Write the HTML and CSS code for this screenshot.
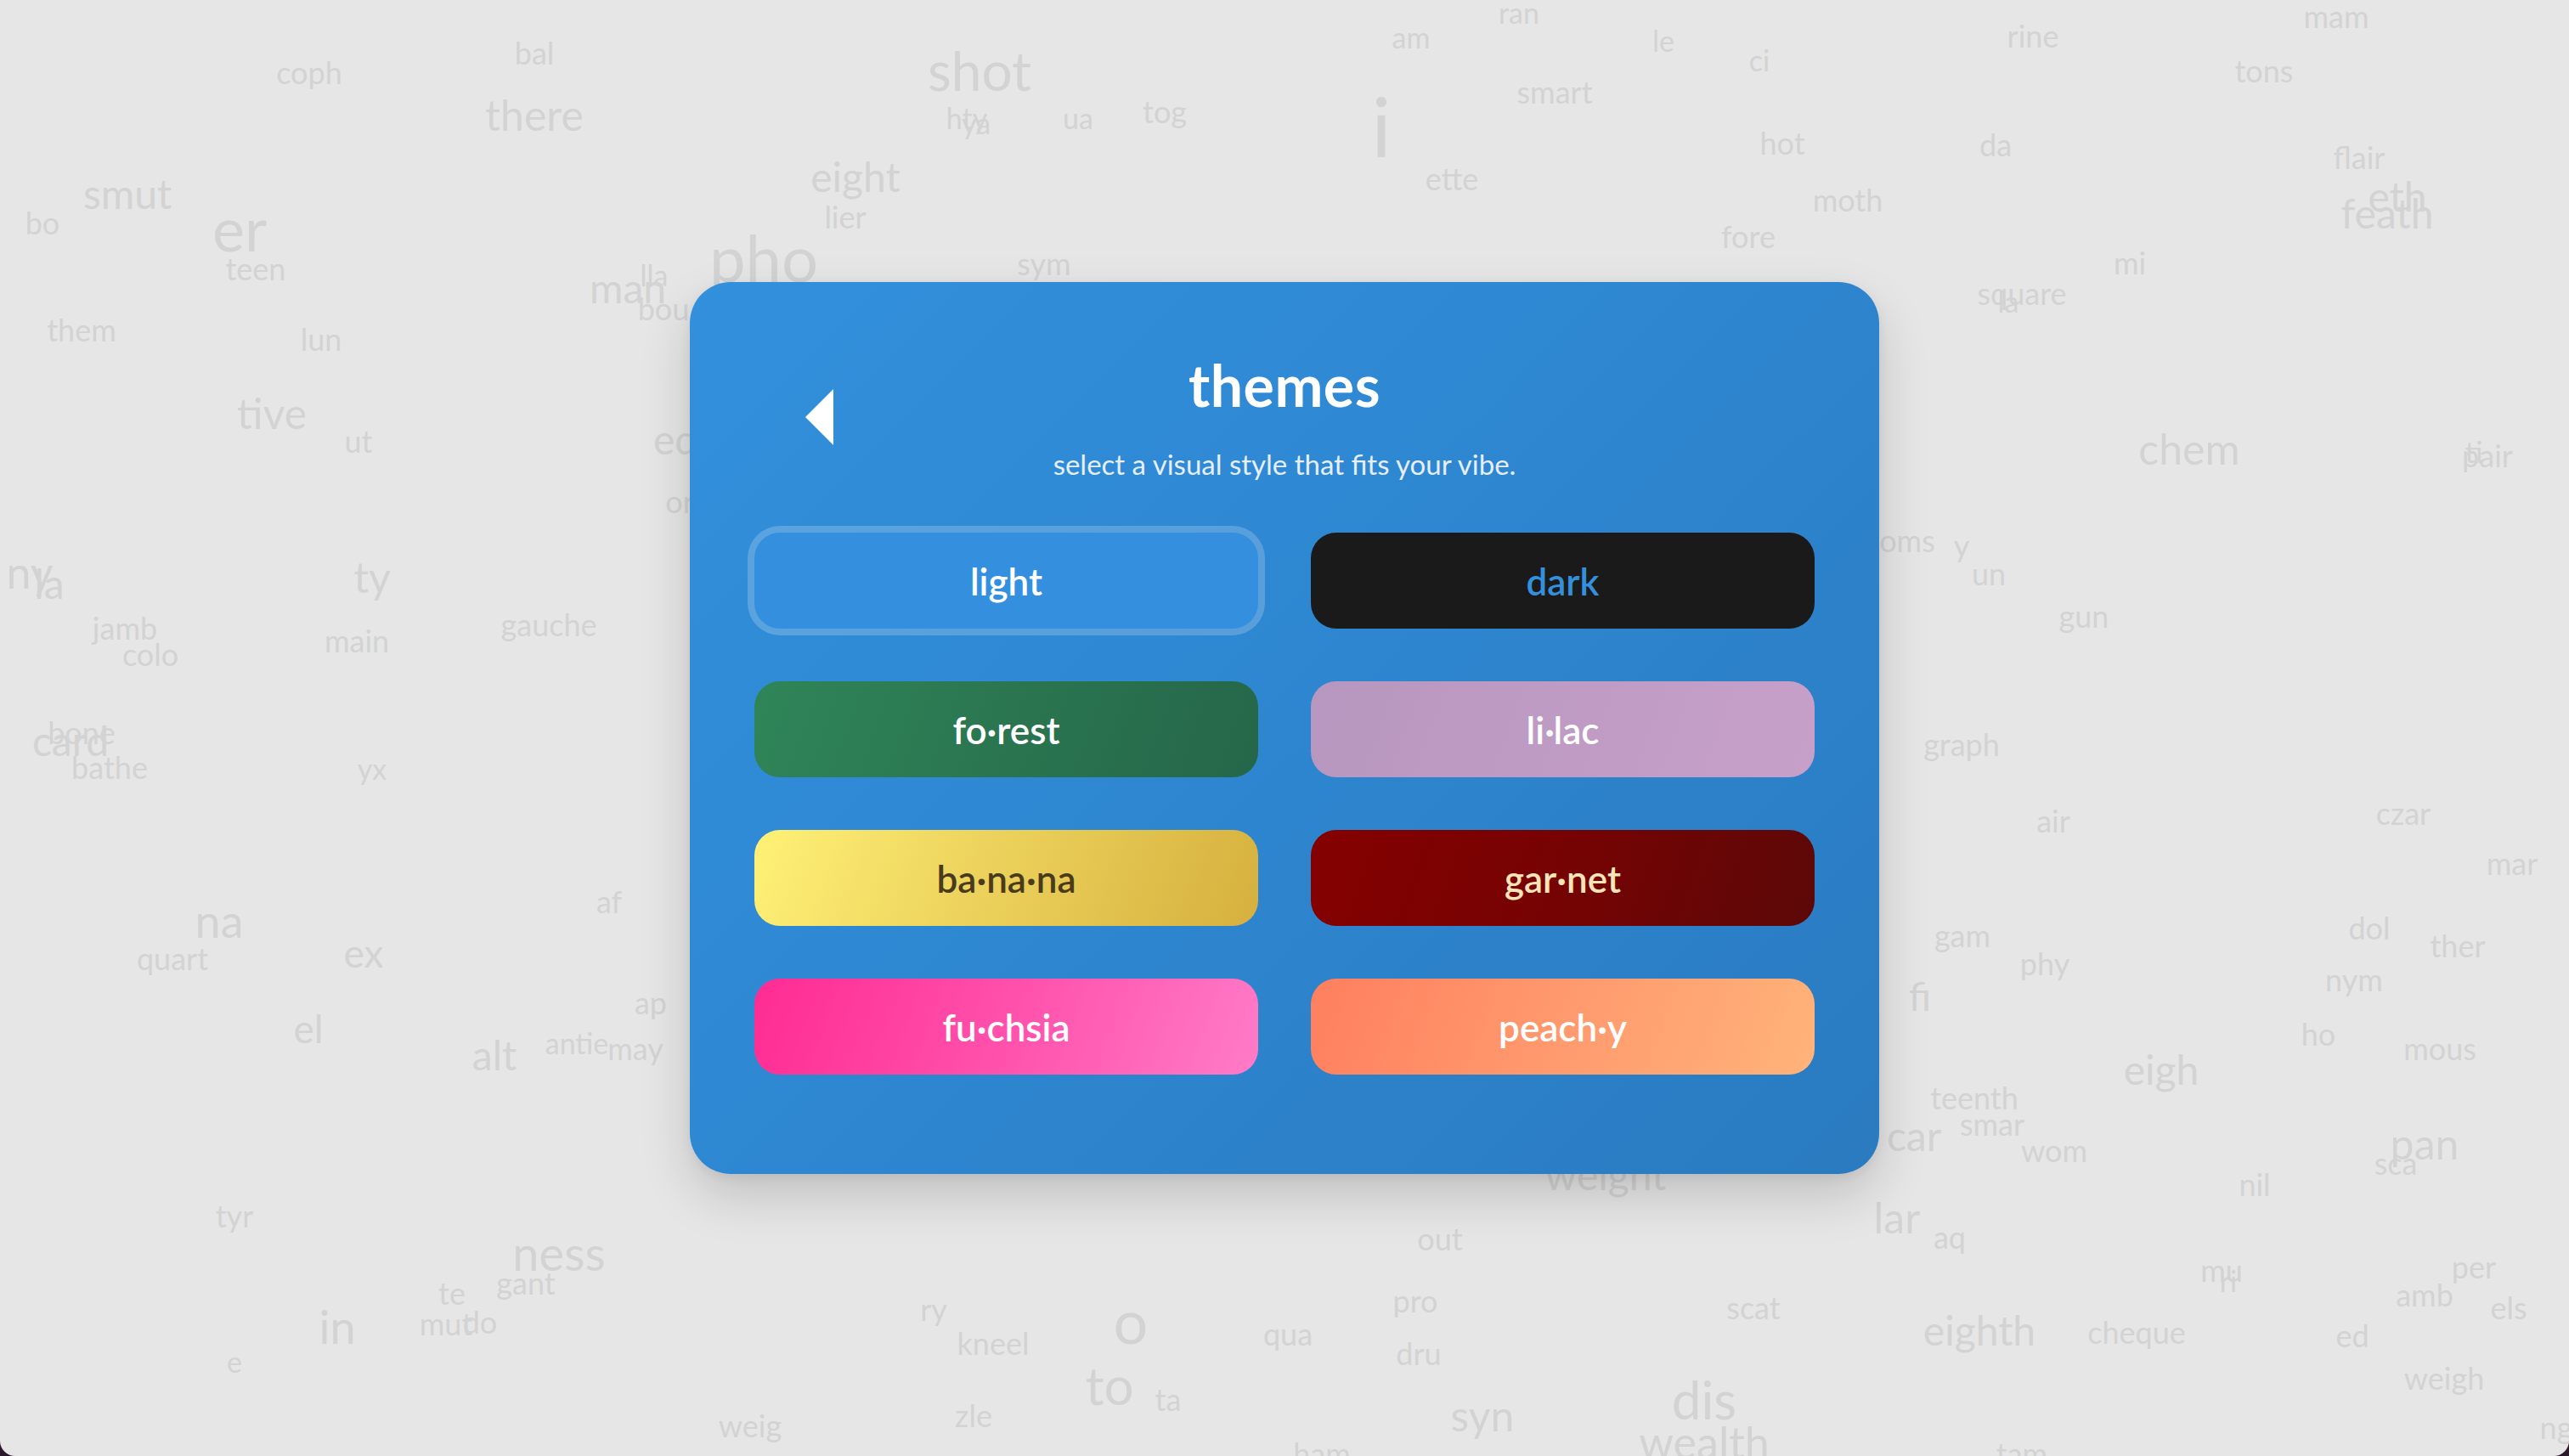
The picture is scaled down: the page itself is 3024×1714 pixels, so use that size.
FILE: index.html
```html
<!DOCTYPE html>
<html lang="en">
<head>
<meta charset="utf-8">
<title>themes</title>
<link rel="stylesheet" href="styles.css">
</head>
<body>
<div class="screen">
  <div class="words" aria-hidden="true">
    <span class="w" style="left:364px;top:85px;font-size:36px">coph</span>
    <span class="w" style="left:629px;top:62px;font-size:36px">bal</span>
    <span class="w" style="left:629px;top:135px;font-size:50px">there</span>
    <span class="w" style="left:1153px;top:83px;font-size:64px">shot</span>
    <span class="w" style="left:1138px;top:139px;font-size:34px">hty</span>
    <span class="w" style="left:1149px;top:145px;font-size:34px">ya</span>
    <span class="w" style="left:1269px;top:139px;font-size:34px">ua</span>
    <span class="w" style="left:1371px;top:131px;font-size:36px">tog</span>
    <span class="w" style="left:1661px;top:44px;font-size:34px">am</span>
    <span class="w" style="left:1788px;top:15px;font-size:34px">ran</span>
    <span class="w" style="left:1958px;top:48px;font-size:34px">le</span>
    <span class="w" style="left:2071px;top:71px;font-size:34px">ci</span>
    <span class="w" style="left:2393px;top:42px;font-size:36px">rine</span>
    <span class="w" style="left:2750px;top:19px;font-size:36px">mam</span>
    <span class="w" style="left:2665px;top:83px;font-size:36px">tons</span>
    <span class="w" style="left:1830px;top:108px;font-size:36px">smart</span>
    <span class="w" style="left:1626px;top:148px;font-size:96px">i</span>
    <span class="w" style="left:2098px;top:168px;font-size:36px">hot</span>
    <span class="w" style="left:2349px;top:170px;font-size:36px">da</span>
    <span class="w" style="left:2777px;top:185px;font-size:36px">flair</span>
    <span class="w" style="left:2822px;top:231px;font-size:48px">eth</span>
    <span class="w" style="left:2810px;top:251px;font-size:48px">feath</span>
    <span class="w" style="left:1007px;top:208px;font-size:48px">eight</span>
    <span class="w" style="left:995px;top:255px;font-size:36px">lier</span>
    <span class="w" style="left:150px;top:228px;font-size:48px">smut</span>
    <span class="w" style="left:50px;top:262px;font-size:36px">bo</span>
    <span class="w" style="left:282px;top:268px;font-size:72px">er</span>
    <span class="w" style="left:301px;top:316px;font-size:36px">teen</span>
    <span class="w" style="left:899px;top:303px;font-size:76px">pho</span>
    <span class="w" style="left:1709px;top:210px;font-size:36px">ette</span>
    <span class="w" style="left:2175px;top:235px;font-size:36px">moth</span>
    <span class="w" style="left:2058px;top:278px;font-size:36px">fore</span>
    <span class="w" style="left:1229px;top:310px;font-size:36px">sym</span>
    <span class="w" style="left:2507px;top:309px;font-size:36px">mi</span>
    <span class="w" style="left:2380px;top:345px;font-size:36px">square</span>
    <span class="w" style="left:2364px;top:355px;font-size:34px">la</span>
    <span class="w" style="left:739px;top:339px;font-size:48px">man</span>
    <span class="w" style="left:770px;top:324px;font-size:34px">lla</span>
    <span class="w" style="left:781px;top:363px;font-size:36px">bou</span>
    <span class="w" style="left:96px;top:388px;font-size:36px">them</span>
    <span class="w" style="left:378px;top:399px;font-size:36px">lun</span>
    <span class="w" style="left:320px;top:486px;font-size:50px">tive</span>
    <span class="w" style="left:422px;top:519px;font-size:36px">ut</span>
    <span class="w" style="left:795px;top:517px;font-size:48px">eq</span>
    <span class="w" style="left:800px;top:590px;font-size:36px">or</span>
    <span class="w" style="left:2577px;top:528px;font-size:50px">chem</span>
    <span class="w" style="left:2928px;top:536px;font-size:36px">pair</span>
    <span class="w" style="left:2912px;top:532px;font-size:34px">ti</span>
    <span class="w" style="left:35px;top:673px;font-size:52px">ny</span>
    <span class="w" style="left:58px;top:687px;font-size:48px">la</span>
    <span class="w" style="left:438px;top:679px;font-size:50px">ty</span>
    <span class="w" style="left:147px;top:739px;font-size:36px">jamb</span>
    <span class="w" style="left:177px;top:770px;font-size:36px">colo</span>
    <span class="w" style="left:420px;top:754px;font-size:36px">main</span>
    <span class="w" style="left:646px;top:735px;font-size:36px">gauche</span>
    <span class="w" style="left:2245px;top:636px;font-size:36px">oms</span>
    <span class="w" style="left:2309px;top:642px;font-size:36px">y</span>
    <span class="w" style="left:2341px;top:675px;font-size:36px">un</span>
    <span class="w" style="left:2453px;top:725px;font-size:36px">gun</span>
    <span class="w" style="left:83px;top:872px;font-size:48px">card</span>
    <span class="w" style="left:96px;top:862px;font-size:36px">bone</span>
    <span class="w" style="left:129px;top:903px;font-size:36px">bathe</span>
    <span class="w" style="left:438px;top:905px;font-size:34px">yx</span>
    <span class="w" style="left:2309px;top:876px;font-size:36px">graph</span>
    <span class="w" style="left:2417px;top:966px;font-size:36px">air</span>
    <span class="w" style="left:2829px;top:957px;font-size:36px">czar</span>
    <span class="w" style="left:2957px;top:1016px;font-size:36px">mar</span>
    <span class="w" style="left:717px;top:1061px;font-size:36px">af</span>
    <span class="w" style="left:258px;top:1084px;font-size:54px">na</span>
    <span class="w" style="left:203px;top:1128px;font-size:36px">quart</span>
    <span class="w" style="left:428px;top:1122px;font-size:46px">ex</span>
    <span class="w" style="left:766px;top:1180px;font-size:36px">ap</span>
    <span class="w" style="left:363px;top:1211px;font-size:46px">el</span>
    <span class="w" style="left:582px;top:1242px;font-size:48px">alt</span>
    <span class="w" style="left:679px;top:1228px;font-size:34px">antie</span>
    <span class="w" style="left:748px;top:1234px;font-size:36px">may</span>
    <span class="w" style="left:2310px;top:1101px;font-size:36px">gam</span>
    <span class="w" style="left:2407px;top:1134px;font-size:36px">phy</span>
    <span class="w" style="left:2260px;top:1173px;font-size:46px">fi</span>
    <span class="w" style="left:2789px;top:1092px;font-size:36px">dol</span>
    <span class="w" style="left:2893px;top:1113px;font-size:36px">ther</span>
    <span class="w" style="left:2771px;top:1153px;font-size:36px">nym</span>
    <span class="w" style="left:2729px;top:1217px;font-size:36px">ho</span>
    <span class="w" style="left:2872px;top:1234px;font-size:36px">mous</span>
    <span class="w" style="left:2544px;top:1259px;font-size:48px">eigh</span>
    <span class="w" style="left:2324px;top:1292px;font-size:36px">teenth</span>
    <span class="w" style="left:2345px;top:1323px;font-size:36px">smar</span>
    <span class="w" style="left:2253px;top:1337px;font-size:48px">car</span>
    <span class="w" style="left:2418px;top:1354px;font-size:36px">wom</span>
    <span class="w" style="left:2854px;top:1346px;font-size:50px">pan</span>
    <span class="w" style="left:2820px;top:1369px;font-size:36px">sca</span>
    <span class="w" style="left:2654px;top:1394px;font-size:36px">nil</span>
    <span class="w" style="left:1890px;top:1383px;font-size:48px">weight</span>
    <span class="w" style="left:2233px;top:1433px;font-size:50px">lar</span>
    <span class="w" style="left:2295px;top:1456px;font-size:36px">aq</span>
    <span class="w" style="left:276px;top:1431px;font-size:36px">tyr</span>
    <span class="w" style="left:658px;top:1475px;font-size:56px">ness</span>
    <span class="w" style="left:1695px;top:1458px;font-size:36px">out</span>
    <span class="w" style="left:2615px;top:1495px;font-size:36px">mu</span>
    <span class="w" style="left:2623px;top:1508px;font-size:34px">ri</span>
    <span class="w" style="left:2912px;top:1491px;font-size:36px">per</span>
    <span class="w" style="left:2854px;top:1524px;font-size:36px">amb</span>
    <span class="w" style="left:2953px;top:1539px;font-size:36px">els</span>
    <span class="w" style="left:532px;top:1522px;font-size:36px">te</span>
    <span class="w" style="left:619px;top:1510px;font-size:36px">gant</span>
    <span class="w" style="left:1666px;top:1531px;font-size:36px">pro</span>
    <span class="w" style="left:2064px;top:1539px;font-size:36px">scat</span>
    <span class="w" style="left:1099px;top:1541px;font-size:36px">ry</span>
    <span class="w" style="left:1331px;top:1554px;font-size:72px">o</span>
    <span class="w" style="left:397px;top:1562px;font-size:54px">in</span>
    <span class="w" style="left:525px;top:1558px;font-size:36px">mut</span>
    <span class="w" style="left:565px;top:1556px;font-size:36px">do</span>
    <span class="w" style="left:2330px;top:1566px;font-size:48px">eighth</span>
    <span class="w" style="left:2515px;top:1568px;font-size:36px">cheque</span>
    <span class="w" style="left:2769px;top:1572px;font-size:36px">ed</span>
    <span class="w" style="left:1169px;top:1581px;font-size:36px">kneel</span>
    <span class="w" style="left:1516px;top:1570px;font-size:36px">qua</span>
    <span class="w" style="left:276px;top:1603px;font-size:34px">e</span>
    <span class="w" style="left:1670px;top:1593px;font-size:36px">dru</span>
    <span class="w" style="left:2877px;top:1622px;font-size:36px">weigh</span>
    <span class="w" style="left:1306px;top:1630px;font-size:62px">to</span>
    <span class="w" style="left:1375px;top:1647px;font-size:36px">ta</span>
    <span class="w" style="left:2006px;top:1647px;font-size:62px">dis</span>
    <span class="w" style="left:1745px;top:1666px;font-size:50px">syn</span>
    <span class="w" style="left:1146px;top:1666px;font-size:36px">zle</span>
    <span class="w" style="left:883px;top:1678px;font-size:36px">weig</span>
    <span class="w" style="left:2006px;top:1697px;font-size:52px">wealth</span>
    <span class="w" style="left:2380px;top:1711px;font-size:36px">tam</span>
    <span class="w" style="left:1556px;top:1711px;font-size:36px">ham</span>
    <span class="w" style="left:3009px;top:1680px;font-size:36px">ng</span>
  </div>

  <section class="modal">
    <header class="modal-head">
      <button class="back" aria-label="back">
        <svg viewBox="0 0 33 66" width="33" height="66"><polygon points="33,0 0,33 33,66" fill="#ffffff"/></svg>
      </button>
      <div class="heading">
        <h1>themes</h1>
        <p>select a visual style that fits your vibe.</p>
      </div>
      <span class="spacer"></span>
    </header>
    <div class="theme-grid">
      <button class="theme t-light is-selected">light</button>
      <button class="theme t-dark">dark</button>
      <button class="theme t-forest">fo·rest</button>
      <button class="theme t-lilac">li·lac</button>
      <button class="theme t-banana">ba·na·na</button>
      <button class="theme t-garnet">gar·net</button>
      <button class="theme t-fuchsia">fu·chsia</button>
      <button class="theme t-peachy">peach·y</button>
    </div>
  </section>
</div>
</body>
</html>
```

FILE: styles.css
```css
html, body {
  margin: 0;
  padding: 0;
}

body {
  background: #2a1a2c;
  font-family: "Lato", "Noto Sans", sans-serif;
  overflow: hidden;
}

.screen {
  position: relative;
  width: 3024px;
  height: 1714px;
  background: #e6e6e6;
  border-radius: 0 0 18px 18px;
  overflow: hidden;
  display: flex;
  align-items: center;
  justify-content: center;
}

.words {
  position: absolute;
  inset: 0;
}

.w {
  position: absolute;
  transform: translate(-50%, -50%);
  color: #d3d3d3;
  line-height: 1;
  white-space: nowrap;
  font-weight: 400;
}

.modal {
  position: relative;
  z-index: 1;
  width: 1400px;
  box-sizing: border-box;
  padding: 87px 76px 117px;
  border-radius: 48px;
  background: linear-gradient(135deg, #3290dc 0%, #2e86d0 50%, #2a7bc0 100%);
  box-shadow: 0 26px 60px rgba(0, 0, 0, 0.16), 0 4px 14px rgba(0, 0, 0, 0.06);
  color: #ffffff;
}

.modal-head {
  display: grid;
  grid-template-columns: 1fr auto 1fr;
  align-items: center;
}

.back {
  justify-self: start;
  margin-left: 60px;
  padding: 0;
  border: 0;
  background: none;
  width: 33px;
  height: 66px;
  display: block;
  cursor: pointer;
}

.back svg {
  display: block;
}

.heading {
  text-align: center;
}

.heading h1 {
  margin: 0;
  font-size: 68px;
  line-height: 1;
  font-weight: 700;
  letter-spacing: 0.5px;
}

.heading p {
  margin: 43px 0 0;
  font-size: 33px;
  line-height: 1;
  color: #e6eef8;
  font-weight: 400;
}

.theme-grid {
  margin-top: 64px;
  display: grid;
  grid-template-columns: 593px 593px;
  grid-auto-rows: 113px;
  column-gap: 62px;
  row-gap: 62px;
}

.theme {
  border: 0;
  margin: 0;
  padding: 0;
  border-radius: 30px;
  font-family: inherit;
  font-size: 44px;
  line-height: 1;
  font-weight: 600;
  color: #ffffff;
  display: flex;
  align-items: center;
  justify-content: center;
  cursor: pointer;
}

.is-selected {
  box-shadow: 0 0 0 8px rgba(255, 255, 255, 0.2);
}

.t-light {
  background: #3490de;
}

.t-dark {
  background: #1a1a1a;
  color: #3490dc;
}

.t-forest {
  background: linear-gradient(110deg, #2f8558 0%, #256649 100%);
}

.t-lilac {
  background: linear-gradient(110deg, #b797bf 0%, #c7a0c9 100%);
}

.t-banana {
  background: linear-gradient(110deg, #fff177 0%, #ecd25c 45%, #d6b03e 100%);
  color: #4a3b1c;
}

.t-garnet {
  background: linear-gradient(110deg, #850000 0%, #760303 50%, #5c0808 100%);
  color: #fbe4b8;
}

.t-fuchsia {
  background: linear-gradient(110deg, #ff2b93 0%, #ff55ae 55%, #ff7bc8 100%);
}

.t-peachy {
  background: linear-gradient(110deg, #ff7f5e 0%, #ff9a6e 50%, #ffb37a 100%);
}
```
